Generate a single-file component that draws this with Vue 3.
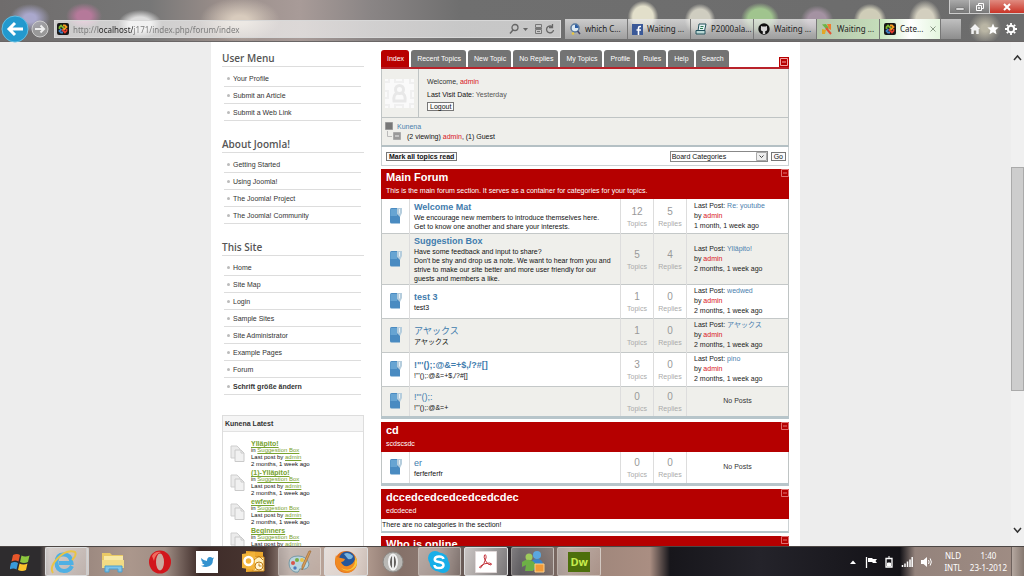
<script setup>
import { ref } from 'vue'

const address = ref('http://localhost/j171/index.php/forum/index')
const board = ref('Board Categories')

const browserTabs = [
  { icon: 'search', label: 'which C...' },
  { icon: 'facebook', label: 'Waiting ...' },
  { icon: 'pager', label: 'P2000ala...' },
  { icon: 'github', label: 'Waiting ...' },
  { icon: 'leaf', label: 'Waiting ...', tint: true },
  { icon: 'joomla', label: 'Cate...', active: true }
]

const menus = [
  { title: 'User Menu', items: ['Your Profile', 'Submit an Article', 'Submit a Web Link'] },
  { title: 'About Joomla!', items: ['Getting Started', 'Using Joomla!', 'The Joomla! Project', 'The Joomla! Community'] },
  { title: 'This Site', items: ['Home', 'Site Map', 'Login', 'Sample Sites', 'Site Administrator', 'Example Pages', 'Forum', 'Schrift größe ändern'] }
]

const latest = ['Ylläpito!', '(1)-Ylläpito!', 'ewfewf', 'Beginners']

const forumTabs = ['Index', 'Recent Topics', 'New Topic', 'No Replies', 'My Topics', 'Profile', 'Rules', 'Help', 'Search']

const sections = [
  {
    title: 'Main Forum',
    text: 'This is the main forum section. It serves as a container for categories for your topics.',
    rows: [
      { name: 'Welcome Mat', lines: ['We encourage new members to introduce themselves here.', 'Get to know one another and share your interests.'], topics: 12, replies: 5, post: 'Re: youtube', when: '1 month, 1 week ago', bold: true },
      { name: 'Suggestion Box', lines: ['Have some feedback and input to share?', "Don't be shy and drop us a note. We want to hear from you and strive to make our site better and more user friendly for our guests and members a like."], topics: 5, replies: 4, post: 'Ylläpito!', when: '2 months, 1 week ago', bold: true },
      { name: 'test 3', lines: ['test3'], topics: 1, replies: 0, post: 'wedwed', when: '2 months, 1 week ago', bold: true },
      { name: 'アヤックス', lines: ['アヤックス'], topics: 1, replies: 0, post: 'アヤックス', when: '2 months, 1 week ago' },
      { name: "!\"'();:@&=+$,/?#[]", lines: ["!\"'();:@&=+$,/?#[]"], topics: 3, replies: 0, post: 'pino', when: '2 months, 1 week ago', bold: true },
      { name: "!\"'();:", lines: ["!\"'();:@&=+"], topics: 0, replies: 0 }
    ]
  },
  { title: 'cd', text: 'scdscsdc', rows: [{ name: 'er', lines: ['ferferferfr'], topics: 0, replies: 0 }] },
  { title: 'dccedcedcedcedcedcdec', text: 'edcdeced', rows: [], empty: 'There are no categories in the section!' },
  { title: 'Who is online', text: '', rows: [] }
]

const tasks = [
  { id: 'ie', label: 'Internet Explorer', state: 'lit stack' },
  { id: 'folder', label: 'Explorer' },
  { id: 'opera', label: 'Opera' },
  { id: 'twitter', label: 'Twitter' },
  { id: 'outlook', label: 'Outlook' },
  { id: 'paint', label: 'Paint', state: 'open' },
  { id: 'firefox', label: 'Firefox', state: 'lit' },
  { id: 'operagray', label: 'Opera Mobile' },
  { id: 'skype', label: 'Skype', state: 'open' },
  { id: 'pdf', label: 'Adobe Reader', state: 'lit' },
  { id: 'messenger', label: 'Messenger', state: 'open' },
  { id: 'dw', label: 'Dreamweaver', state: 'open' }
]
</script>

<template>
  <div class="screen">
    <header class="chrome">
      <div class="window-controls">
        <button type="button" aria-label="Minimize"><svg width="10" height="10" viewBox="0 0 10 10"><path d="M1 6h8v2H1z" fill="#fff" stroke="#555" stroke-width=".5" /></svg></button>
        <button type="button" aria-label="Restore"><svg width="10" height="10" viewBox="0 0 10 10" fill="none" stroke="#fff"><path d="M3.500 3V1.500h5v5H7" /><path d="M1.500 3.500h5v5h-5zM3.500 5.500h1v1h-1z" /></svg></button>
        <button type="button" class="close" aria-label="Close"><svg width="10" height="10" viewBox="0 0 10 10"><path d="M2 2l6 6M8 2L2 8" stroke="#fff" stroke-width="2" /></svg></button>
      </div>
      <div class="toolbar">
        <button type="button" class="back" aria-label="Back"><svg width="28" height="28" viewBox="0 0 28 28"><circle cx="14" cy="14" r="13" fill="#2299ce" stroke="#63bde1" /><path d="M22 14H8M14 8l-6 6 6 6" fill="none" stroke="#fff" stroke-width="3" /></svg></button>
        <button type="button" class="forward" aria-label="Forward"><svg width="18" height="18" viewBox="0 0 18 18"><circle cx="9" cy="9" r="8" fill="#aaa" fill-opacity=".7" stroke="#ccc" /><path d="M4 9h9M9.500 5.500L13 9l-3.500 3.500" fill="none" stroke="#eee" stroke-width="2" /></svg></button>
        <div class="address">
          <svg width="12" height="12" viewBox="0 0 12 12"><rect width="12" height="12" rx="2" fill="#181818" /><path d="M2.500 6V4L4 2.500l4 4" stroke="#7ab62f" stroke-width="1.800" fill="none" /><path d="M6 2.500h2L9.500 4l-4 4" stroke="#f39a1f" stroke-width="1.800" fill="none" /><path d="M9.500 6v2L8 9.500l-3-3" stroke="#e23b2c" stroke-width="1.800" fill="none" /><path d="M6 9.500H4L2.500 8l2-2" stroke="#3d80c6" stroke-width="1.800" fill="none" /></svg>
          <input v-model="address" type="text" aria-label="Address">
          <svg width="46" height="12" viewBox="0 0 46 12" fill="none" stroke="#666"><circle cx="6" cy="4.500" r="3" stroke-width="1.300" /><path d="M4 7L1 10.500" stroke-width="1.500" /><path d="M14 5h5l-2.500 3z" fill="#666" stroke="none" /><path d="M26.500 1.500h6v3h-6zM26.500 6.500h6v4h-6zM26 5.500h7M28 8.500h3" stroke="#777" /><path d="M43 3.500A3.500 3.500 0 1 0 44.500 7M43.500 1v3.500H40" stroke-width="1.300" /></svg>
        </div>
        <nav class="tabs" aria-label="Open pages">
          <button v-for="(tab, i) in browserTabs" :key="i" type="button" class="tab" :class="{ active: tab.active, tint: tab.tint }">
            <svg v-if="tab.icon === 'search'" width="12" height="12" viewBox="0 0 12 12"><circle cx="6" cy="5" r="4" fill="#dce9f3" stroke="#59799c" stroke-width="1.500" /><path d="M6 1.500A3.500 3.500 0 0 1 9.500 5H6z" fill="#2c5fa6" /><path d="M8.500 8l2.500 3" stroke="#446" stroke-width="1.500" /><circle cx="4" cy="10.500" r="1.300" fill="#e8c63c" /></svg>
            <svg v-else-if="tab.icon === 'facebook'" width="11" height="11" viewBox="0 0 11 11"><rect width="11" height="11" fill="#3b5998" /><path d="M9 2.500H8q-1.500 0-1.500 1.500v7M4.500 6H9" fill="none" stroke="#fff" stroke-width="1.600" /></svg>
            <svg v-else-if="tab.icon === 'pager'" width="12" height="12" viewBox="0 0 12 12"><path d="M4 1h7L9.500 8H3z" fill="#e7f3f6" stroke="#22505b" /><path d="M1 7.500h9V11H1z" fill="#b9d7d4" stroke="#22505b" /><path d="M5.500 3.500h3M5 5.500h3" stroke="#297b50" /></svg>
            <svg v-else-if="tab.icon === 'github'" width="12" height="12" viewBox="0 0 12 12"><circle cx="6" cy="6" r="5.700" fill="#111" /><path d="M3 3l1.500.6q1.500-.4 3 0L9 3v2q.7 3-1.800 3.200V11H4.800V8.200Q2.300 8 3 5z" fill="#d5d5d5" /></svg>
            <svg v-else-if="tab.icon === 'leaf'" width="12" height="12" viewBox="0 0 12 12"><path d="M1 1.500l4-.5 3 4-2 2z" fill="#6db445" /><path d="M6 1h4v6L8 6z" fill="#f07d2e" /><path d="M1 6l4 1-1 4H1z" fill="#e1a726" /><path d="M5 5l5 6" stroke="#e55132" stroke-width="2" /></svg>
            <svg v-else width="12" height="12" viewBox="0 0 12 12"><rect width="12" height="12" rx="2" fill="#181818" /><path d="M2.500 6V4L4 2.500l4 4" stroke="#7ab62f" stroke-width="1.800" fill="none" /><path d="M6 2.500h2L9.500 4l-4 4" stroke="#f39a1f" stroke-width="1.800" fill="none" /><path d="M9.500 6v2L8 9.500l-3-3" stroke="#e23b2c" stroke-width="1.800" fill="none" /><path d="M6 9.500H4L2.500 8l2-2" stroke="#3d80c6" stroke-width="1.800" fill="none" /></svg>
            <span>{{ tab.label }}</span>
            <svg v-if="tab.active" class="tab-close" width="8" height="8" viewBox="0 0 8 8"><path d="M1.500 1.500l5 5M6.500 1.500l-5 5" stroke="#8a9a86" /></svg>
          </button>
          <button type="button" class="new-tab" aria-label="New tab"></button>
        </nav>
        <div class="tools">
          <button type="button" aria-label="Home"><svg width="12" height="12" viewBox="0 0 12 12"><path d="M6 1l5 5H9.700v5H7.200V7.500H4.800V11H2.300V6H1z" fill="#f2f2f2" /></svg></button>
          <button type="button" aria-label="Favorites"><svg width="12" height="12" viewBox="0 0 12 12"><path d="M6 .5l1.600 3.700 4 .4-3 2.700.9 4L6 9.200l-3.500 2.100.9-4-3-2.700 4-.4z" fill="#fff" /></svg></button>
          <button type="button" aria-label="Tools"><svg width="12" height="12" viewBox="0 0 12 12"><circle cx="6" cy="6" r="3.200" fill="none" stroke="#fff" stroke-width="2" /><path d="M6 0v2M6 10v2M0 6h2M10 6h2M1.800 1.800l1.400 1.400M8.800 8.800l1.400 1.400M10.200 1.800L8.800 3.200M3.200 8.800l-1.400 1.400" stroke="#fff" stroke-width="1.800" /></svg></button>
        </div>
      </div>
    </header>

    <div class="viewport">
      <div class="page">
        <aside class="sidebar">
          <nav v-for="menu in menus" :key="menu.title" class="menu">
            <h3>{{ menu.title }}</h3>
            <ul>
              <li v-for="item in menu.items" :key="item"><a href="#" :class="{ strong: item.startsWith('Schrift') }">{{ item }}</a></li>
            </ul>
          </nav>
          <section class="latest">
            <h4>Kunena Latest</h4>
            <ul>
              <li v-for="topic in latest" :key="topic">
                <svg width="15" height="18" viewBox="0 0 15 18"><path d="M1 1h6l3 3v9H1z" fill="#ebebeb" stroke="#cfcfcf" /><path d="M5 5h6l3 3v8.500H5z" fill="#f1f1f1" stroke="#cacaca" /><path d="M11 5v3h3" fill="none" stroke="#cacaca" /></svg>
                <div>
                  <a href="#" class="topic">{{ topic }}</a>
                  <p>in <a href="#">Suggestion Box</a></p>
                  <p>Last post by <a href="#">admin</a></p>
                  <p>2 months, 1 week ago</p>
                </div>
              </li>
            </ul>
          </section>
        </aside>

        <main class="forum">
          <div class="forum-top">
            <nav class="forum-tabs">
              <a v-for="(tab, i) in forumTabs" :key="tab" href="#" :class="{ current: i === 0 }">{{ tab }}</a>
            </nav>
            <button type="button" class="top-toggle" aria-label="Collapse"><svg width="8" height="8" viewBox="0 0 8 8"><path d="M.5.5h7v7h-7zM2 4h4" fill="none" stroke="#f3a5a5" /></svg></button>
          </div>
          <div class="profile">
            <div class="avatar"><svg width="29" height="29" viewBox="0 0 29 29"><rect width="29" height="29" fill="#fafafa" /><path d="M0 3h4V0M10 0v3h8V0M25 0v4h4M0 12h3v7H0M29 12h-3v7h3M0 26h4v3M10 29v-3h8v3M25 29v-4h4" fill="none" stroke="#f0f0f0" stroke-width="2" /><circle cx="14.500" cy="10.500" r="4" fill="none" stroke="#e8e8e8" stroke-width="3" /><path d="M12 14q-4 2-3 8h11q1-6-3-8" fill="none" stroke="#e8e8e8" stroke-width="3" /></svg></div>
            <div class="welcome">
              <p>Welcome, <a href="#">admin</a></p>
              <p class="visit">Last Visit Date: <span>Yesterday</span></p>
              <button type="button" class="plain">Logout</button>
            </div>
          </div>
          <div class="path">
            <p><svg width="8" height="8" viewBox="0 0 8 8"><path d="M.5.5h7v7h-7z" fill="#777" stroke="#999" /></svg><a href="#">Kunena</a></p>
            <p class="viewing"><svg width="14" height="10" viewBox="0 0 14 10"><path d="M.5 0v5.500H5" fill="none" stroke="#bbb" /><path d="M6.500 1.500h7v7h-7z" fill="#999" stroke="#aaa" /><path d="M8 5h4" stroke="#eee" /></svg><span>(2 viewing) <a href="#">admin</a>, (1) Guest</span></p>
          </div>
          <form class="actions" @submit.prevent>
            <button type="button" class="plain mark">Mark all topics read</button>
            <div class="jump">
              <span class="select-box">
                <select v-model="board" aria-label="Board categories"><option>Board Categories</option></select>
                <svg width="11" height="9" viewBox="0 0 11 9"><path d="M.5.500h10v8h-10z" fill="#eee" stroke="#aaa" /><path d="M3.500 3.500l2 2 2-2" fill="none" stroke="#444" /></svg>
              </span>
              <button type="submit" class="plain go">Go</button>
            </div>
          </form>

          <section v-for="section in sections" :key="section.title" class="block">
            <header>
              <h2>{{ section.title }}</h2>
              <p>{{ section.text }}</p>
              <button type="button" class="toggle" aria-label="Collapse section"><svg width="8" height="8" viewBox="0 0 8 8"><path d="M.5.5h7v7h-7zM2 4h4" fill="none" stroke="#e07070" /></svg></button>
            </header>
            <table v-if="section.rows.length">
              <tbody>
                <tr v-for="row in section.rows" :key="row.name">
                  <td class="icon"><svg width="14" height="18" viewBox="0 0 14 18"><path d="M1 2.500q0-1.500 1.500-1.500H11v15.500H2.500Q1 16.500 1 15z" fill="#4a8bc1" /><path d="M1.500 2H8v7H1.500z" fill="#67a4d2" /><path d="M8 1h5v5l-2 4-3-3z" fill="#b5cddd" /><path d="M10.500 2v4.500" stroke="#e8f1f7" /></svg></td>
                  <td class="name">
                    <h5 :class="{ bold: row.bold }"><a href="#">{{ row.name }}</a></h5>
                    <p v-for="line in row.lines" :key="line">{{ line }}</p>
                  </td>
                  <td class="count"><b>{{ row.topics }}</b><span>Topics</span></td>
                  <td class="count"><b>{{ row.replies }}</b><span>Replies</span></td>
                  <td v-if="row.post" class="last">
                    <p>Last Post: <a href="#">{{ row.post }}</a></p>
                    <p>by <a href="#" class="user">admin</a></p>
                    <p>{{ row.when }}</p>
                  </td>
                  <td v-else class="last none">No Posts</td>
                </tr>
              </tbody>
            </table>
            <p v-else-if="section.empty" class="empty">{{ section.empty }}</p>
          </section>
        </main>
      </div>
      <div class="scrollbar" aria-hidden="true">
        <svg width="13" height="12" viewBox="0 0 13 12"><path d="M3 8l3.500-4L10 8" fill="none" stroke="#333" stroke-width="1.500" /></svg>
        <div class="track"><div class="thumb"></div></div>
        <svg width="13" height="12" viewBox="0 0 13 12"><path d="M3 4l3.500 4L10 4" fill="none" stroke="#333" stroke-width="1.500" /></svg>
      </div>
    </div>

    <footer class="taskbar">
      <button type="button" class="start" aria-label="Start"><svg width="22" height="20" viewBox="0 0 22 20"><path d="M3 3q4-2 7 0L8.500 9.500q-3-2-7 0z" fill="#e8562a" /><path d="M11.500 3.500q3.500 2 8 0L18 10q-4 2-8 0z" fill="#8cc63e" /><path d="M1 11q4-2 7 0l-1.500 6.500q-3-2-7 0z" fill="#3a9ad9" /><path d="M9.500 11.500q4 2 8 0L16 18q-4 2-8 0z" fill="#fbc32c" /></svg></button>
      <div class="tasks">
        <button v-for="task in tasks" :key="task.id" type="button" :class="task.state" :aria-label="task.label">
          <svg v-if="task.id === 'ie'" width="28" height="26" viewBox="0 0 28 26"><path d="M22 17Q19.500 22 14 22q-7.500 0-7.500-8.500T14 5.500q7 0 7.500 8.500H9" fill="none" stroke="#4fb0e4" stroke-width="4" /><path d="M3 24Q-1 18 8 9T25 3q2 3-3 8" fill="none" stroke="#e9c446" stroke-width="2" /></svg>
          <svg v-else-if="task.id === 'folder'" width="26" height="24" viewBox="0 0 26 24"><path d="M2 3h8l2 2h11v13H2z" fill="#e9c965" /><path d="M4 6h19v12H4z" fill="#f8e9a5" /><path d="M2 10h22v8H2z" fill="#f2db84" /><path d="M5 22v-6h17v6h-4v-3H9v3z" fill="#7fc4e8" stroke="#4b9fcf" /></svg>
          <svg v-else-if="task.id === 'opera'" width="24" height="24" viewBox="0 0 24 24"><ellipse cx="12" cy="12" rx="11" ry="11.500" fill="#d2161c" /><path d="M4 6q3-5 9-4-6 2-7 9z" fill="#f06a5e" /><ellipse cx="12" cy="12" rx="4" ry="8.500" fill="#c9aaa0" /></svg>
          <svg v-else-if="task.id === 'twitter'" width="22" height="22" viewBox="0 0 22 22"><rect width="22" height="22" fill="#fff" /><path d="M5 7q3 3 6 3 0-4 3-4 1.500 0 2.300 1L18 6.500 17 8.500q0 7-7 7.500-3 0-5-1.300 2.500 0 3.500-1.200Q6 13 6 11.500h1Q5 10 5 7z" fill="#3492cf" /></svg>
          <svg v-else-if="task.id === 'outlook'" width="24" height="24" viewBox="0 0 24 24"><path d="M5 1l17 1v19L5 22z" fill="#eda82c" /><path d="M12 7h11v14H12z" fill="#fff0bb" stroke="#d48b18" /><path d="M1 4l13-2v18L1 18z" fill="#f2b43a" /><circle cx="7.500" cy="11" r="4" fill="none" stroke="#fff" stroke-width="2.500" /><circle cx="18" cy="16" r="4" fill="#fff6d6" stroke="#bf7b12" /><path d="M18 13.500V16h2.500M13 10l5-4 4 4" fill="none" stroke="#c17d15" /></svg>
          <svg v-else-if="task.id === 'paint'" width="26" height="24" viewBox="0 0 26 24"><path d="M2 13Q2 6 11 6t11 8q-1 6-7 5-3-1-3 1.500T8 22Q2 20 2 13z" fill="#b9d5df" stroke="#7698a5" /><circle cx="6" cy="13" r="2" fill="#d9534a" /><circle cx="10" cy="10" r="2" fill="#7aad48" /><circle cx="15" cy="10" r="2" fill="#e8c34a" /><circle cx="8" cy="18" r="1.700" fill="#4b79be" /><path d="M24 1l-7 16-2 3 0-4 7-15z" fill="#d89b57" stroke="#9c6c37" stroke-width=".7" /></svg>
          <svg v-else-if="task.id === 'firefox'" width="26" height="24" viewBox="0 0 26 24"><circle cx="13" cy="12" r="11" fill="#e3701c" /><circle cx="14" cy="9.500" r="8" fill="#24569a" /><path d="M11 4q4-3 9 2-1 4-5 3z" fill="#79b4df" /><path d="M3 5q1 3 5 3l4 1q-1 3-4 3 2 5 7 4 6-2 7-7 4 6-1 11-6 5-13 1Q0 16 3 5z" fill="#f08a22" /><path d="M22 6q5 8-2 13-7 4-12-1 8 4 12-1 3-4 2-11z" fill="#f8c93c" /></svg>
          <svg v-else-if="task.id === 'operagray'" width="22" height="22" viewBox="0 0 22 22"><circle cx="11" cy="11" r="10" fill="#b9b8b5" stroke="#8b8884" /><ellipse cx="11" cy="11" rx="4" ry="7.500" fill="#625f5d" stroke="#f2f2f2" stroke-width="2" /><path d="M11 4v14" stroke="#e9e9e9" stroke-width="2" /></svg>
          <svg v-else-if="task.id === 'skype'" width="24" height="24" viewBox="0 0 24 24"><circle cx="8" cy="8" r="7" fill="#17aee8" /><circle cx="16" cy="16" r="7" fill="#17aee8" /><circle cx="12" cy="12" r="9.500" fill="#17aee8" /><path d="M16.500 9Q16 6.500 12 6.500T7.700 9.300Q7.700 11.500 12 12t4.500 3q0 3-4.500 3t-4.500-3" fill="none" stroke="#fff" stroke-width="2.500" /></svg>
          <svg v-else-if="task.id === 'pdf'" width="22" height="22" viewBox="0 0 22 22"><path d="M.5.5h21v21H.5z" fill="#fff" stroke="#e2dada" /><path d="M9.500 4q2-1 1.500 3-1.500 6-5.500 10-2 0 0-2 4-3 9-3 3 .5 1.500 2-3 .5-6-5-1.500-3-.5-5z" fill="none" stroke="#c4333b" /></svg>
          <svg v-else-if="task.id === 'messenger'" width="26" height="24" viewBox="0 0 26 24"><circle cx="17" cy="5" r="4" fill="#5ba7df" /><path d="M11 20V13q1-4 6-4t6 5v6z" fill="#3985ca" /><circle cx="9" cy="7" r="3.500" fill="#9fcb5b" /><path d="M2 12q4-3 8-2t6 5l-3 6H5l1-6-4 2z" fill="#6daf46" /><path d="M15 14h9v8h-9z" fill="#f19a38" stroke="#ffd08a" /></svg>
          <span v-else class="dw">Dw</span>
        </button>
      </div>
      <div class="tray">
        <svg width="8" height="8" viewBox="0 0 8 8"><path d="M1 6l3-3.500L7 6z" fill="#fff" /></svg>
        <svg width="12" height="12" viewBox="0 0 12 12"><path d="M1.500 1v11" stroke="#fff" stroke-width="1.300" /><path d="M3 2h4l1 1h4L10.500 5 12 7H8L7 6H3z" fill="#fff" /></svg>
        <svg width="8" height="12" viewBox="0 0 8 12"><path d="M1 2.500h6V11H1z" fill="none" stroke="#fff" stroke-width="1.300" /><path d="M3 1h2M2.500 7h3v3h-3z" fill="#fff" stroke="#fff" /></svg>
        <svg width="12" height="12" viewBox="0 0 12 12" stroke="#fff" stroke-width="1.500"><path d="M1.500 9v2M4 7.500V11M6.500 5.500V11M9 3.500V11M11.200 1v10" /></svg>
        <svg width="12" height="12" viewBox="0 0 12 12"><path d="M0 4h2.500L6 1v10L2.500 8H0z" fill="#fff" /><path d="M7.500 4q1.300 2 0 4M9.200 2.500q2.300 3.500 0 7" fill="none" stroke="#fff" /></svg>
        <p class="lang">NLD<br>INTL</p>
        <p class="clock">1:40<br>23-1-2012</p>
      </div>
      <button type="button" class="show-desktop" aria-label="Show desktop"></button>
    </footer>
  </div>
</template>

<style>
html, body { margin: 0; overflow: hidden; }
</style>

<style scoped>
.screen { display: flex; flex-direction: column; height: 100vh; overflow: hidden; background: #ededed; color: #333; font: 7px/9px "Liberation Sans", "Noto Sans CJK JP", sans-serif; }
.screen * { box-sizing: border-box; }
button, input, select { font: inherit; color: inherit; margin: 0; padding: 0; border: 0; background: none; }
h2, h3, h4, h5, p, ul { margin: 0; padding: 0; list-style: none; font-size: inherit; }
a { color: inherit; text-decoration: none; }
svg { display: block; flex: none; }

.chrome {
  position: relative; flex: none; padding-top: 16px; height: 42px;
  font: 8px/12px "Noto Sans", "Open Sans", sans-serif;
  border-bottom: 1px solid #6a6666;
  background:
    radial-gradient(ellipse 20px 14px at 30px 18px, #aaa8cc 30%, transparent),
    radial-gradient(ellipse 18px 13px at 84px 16px, #b5799a 40%, transparent),
    radial-gradient(ellipse 22px 14px at 140px 24px, #ddd 50%, transparent),
    radial-gradient(ellipse 40px 22px at 240px 20px, #d8cbbd 20%, transparent),
    radial-gradient(ellipse 17px 18px at 643px 17px, #e2dfca 60%, transparent 90%),
    radial-gradient(ellipse 17px 18px at 700px 20px, #cfcdc0 60%, transparent 90%),
    radial-gradient(ellipse 20px 17px at 760px 19px, #a0c48e 60%, transparent 95%),
    radial-gradient(ellipse 18px 16px at 817px 20px, #a492a2 50%, transparent 90%),
    radial-gradient(ellipse 18px 18px at 870px 20px, #cfcdb8 60%, transparent 90%),
    radial-gradient(ellipse 18px 22px at 925px 20px, #d3cfbf 50%, transparent 90%),
    radial-gradient(ellipse 18px 18px at 985px 28px, #b9b5a4 20%, transparent 90%),
    linear-gradient(90deg, #6f6c6c, #777 150px, #9a8e8a 220px, #a89b98 300px, #8a8585 370px, #6f6f6f 460px, #6c6c6c);
}
.window-controls { position: absolute; top: 0; right: 0; display: flex; height: 14px; border: 1px solid #ccc; border-top: 0; border-right: 0; }
.window-controls button { display: grid; place-items: center; width: 20px; background: linear-gradient(#aaa, #777); border-right: 1px solid #ccc; }
.window-controls .close { width: 34px; border: 0; background: linear-gradient(#e08b80, #c93427); }
.toolbar { display: flex; align-items: center; height: 26px; }
.back { width: 28px; margin-left: 1px; }
.forward { width: 18px; margin-left: 2px; }
.address { flex: 1; display: flex; align-items: center; gap: 4px; height: 18px; margin-left: 5px; padding: 0 5px 0 2px; border: 1px solid #d8d8d8; background: linear-gradient(90deg, rgba(255, 255, 255, .65), rgba(235, 235, 235, .7)); }
.address input { flex: 1; min-width: 0; height: 14px; color: transparent; outline: 0; background: linear-gradient(90deg, #777 25px, #222 25px 60px, #777 60px); background-clip: text; -webkit-background-clip: text; }
.tabs { display: flex; margin-left: 4px; height: 20px; }
.tab { display: flex; align-items: center; gap: 4px; width: 63px; padding-left: 4px; overflow: hidden; white-space: nowrap; color: #222; border-right: 1px solid #777; background: linear-gradient(rgba(235, 235, 235, .75), rgba(175, 175, 175, .75)); }
.tab.tint { background: linear-gradient(90deg, #b4c5ab, #c5ddba); }
.tab.active { width: 61px; background: linear-gradient(90deg, #c8e8bd, #fff 50%, #e4f5de); }
.tab-close { margin-left: auto; margin-right: 3px; }
.new-tab { width: 20px; background: linear-gradient(#c0c0c0, #8d8d8d); }
.tools { display: flex; gap: 6px; padding: 0 7px 0 8px; }

.viewport { flex: 1; min-height: 0; display: flex; overflow: hidden; }
.page { display: grid; grid-template-columns: 142px 1fr; gap: 17px; width: 589px; max-width: 100%; margin: 0 auto; padding: 8px 11px 0; background: #fff; align-self: flex-start; }
.scrollbar { flex: none; width: 13px; display: flex; flex-direction: column; padding: 10px 0; background: #f0f0f0; }
.track { flex: 1; display: flex; flex-direction: column; }
.track::before { content: ""; flex: 103; }
.track::after { content: ""; flex: 134; }
.thumb { flex: 223; background: #cdcdcd; border: 1px solid #aaa; }

.menu { margin-bottom: 15px; }
.menu h3 { padding-top: 1px; padding-bottom: 1px; border-bottom: 1px solid #ddd; font: 600 10px/14px "Open Sans", "Noto Sans", sans-serif; color: #555; }
.menu ul { padding: 3px 3px 0 2px; }
.menu li { display: flex; align-items: center; gap: 3px; height: 17px; padding-left: 3px; border-bottom: 1px solid #ddd; }
.menu li::before { content: ""; width: 3px; height: 3px; border-radius: 50%; background: #bbb; }
.menu .strong { font-weight: bold; }
.latest { margin-top: 20px; border: 1px solid #ddd; border-bottom: 0; }
.latest h4 { padding: 3px 2px; border-bottom: 1px solid #e2e2e2; background: #f5f5f5; }
.latest ul { padding: 8px 0 0 7px; }
.latest li { display: flex; align-items: center; gap: 6px; margin-bottom: 1px; font-size: 6px; line-height: 7px; color: #111; }
.latest a { color: #78a22f; text-decoration: underline; }
.latest .topic { display: block; font-size: 7px; font-weight: bold; }

.forum-top { display: flex; justify-content: space-between; align-items: flex-end; border-bottom: 2px solid #b9222a; }
.forum-tabs { display: flex; gap: 2px; }
.forum-tabs a { padding: 4px 5px 4px 6px; border-radius: 3px 3px 0 0; background: #737373; color: #fff; }
.forum-tabs .current { background: #b80000; }
.top-toggle { padding: 1px; background: #b80000; }
.profile { display: flex; min-height: 49px; border: 1px solid #bfc4c4; border-top: 0; background: #efefeb; }
.avatar { display: flex; align-items: center; padding: 0 4px 0 3px; border-right: 1px solid #bfc4c4; }
.welcome { padding: 8px 8px 5px; }
.welcome a, .user, .viewing a { color: #d8141c; }
.visit { margin: 4px 0 3px; color: #111; }
.visit span { color: #555; }
.plain { height: 9px; padding: 0 2px; border: 1px solid #777; line-height: 7px; color: #111; background: #fafafa; }
.welcome .plain { display: block; }
.path { padding: 3px 3px 4px; border: 1px solid #bfc4c4; border-top: 0; border-bottom: 2px solid #b4c0c4; background: #efefeb; }
.path p { display: flex; align-items: center; gap: 4px; min-height: 10px; color: #111; }
.path p > a { color: #4a80ae; }
.path .viewing { gap: 6px; padding-left: 2px; }
.actions { display: flex; justify-content: space-between; align-items: center; height: 19px; margin-bottom: 3px; padding: 0 2px 0 4px; border: 1px solid #ccd2d4; border-top: 0; }
.mark { font-weight: bold; }
.jump { display: flex; gap: 3px; align-items: center; }
.select-box { position: relative; display: block; }
.select-box select { display: block; width: 98px; height: 11px; padding: 0 12px 0 1px; border: 1px solid #888; appearance: none; background: #fff; color: #111; line-height: 9px; }
.select-box svg { position: absolute; top: 1px; right: 1px; pointer-events: none; }

.block { margin-bottom: 3px; }
.block header { position: relative; min-height: 30px; padding: 2px 5px 3px; background: #b50000; color: #fff; }
.block h2 { font-size: 11px; line-height: 13px; }
.block header p { margin-top: 2px; line-height: 9px; }
.toggle { position: absolute; top: 0; right: 0; }
table { width: 100%; border-collapse: collapse; border: 1px solid #bfc4c4; border-top: 0; border-bottom: 3px solid #b7c5ca; table-layout: fixed; }
tr { height: 34px; }
tr:last-child { height: 31px; }
tr:only-child { height: 33px; }
tr:nth-child(even) { background: #efefeb; }
tr + tr { border-top: 1px solid #c4c8c8; }
td { padding: 0; }
td + td { border-left: 1px solid #ddd; }
.icon { width: 28px; }
.icon svg { margin: 0 auto; }
.name { padding: 1px 4px; }
.name h5 { font-size: 9px; line-height: 12px; font-weight: normal; color: #3f7cad; }
.name .bold { font-weight: bold; }
.name p { color: #111; }
.count { width: 33px; padding-top: 2px; text-align: center; color: #999; }
.count b { display: block; font-size: 10px; line-height: 14px; font-weight: normal; }
.count span { display: block; line-height: 10px; color: #aaa; }
.last { width: 102px; padding-left: 7px; line-height: 10px; }
.last p { color: #222; }
.last a { color: #4a80ae; }
.last .user { color: #d8141c; }
.none { padding: 0; text-align: center; }
.empty { min-height: 14px; padding-top: 1px; color: #111; border: 1px solid #ccd2d4; border-top: 0; border-bottom: 2px solid #b7c5ca; }

.taskbar {
  flex: none; display: flex; height: 30px; border-top: 1px solid #4c4644; color: #fff;
  background: linear-gradient(90deg, #2e2c2e 40px, #8f7d76 50px, #ab978c 130px, #a08e85 165px, #3d2b28 200px, #4a3732 265px, #a8968d 290px, #c5ada0 350px, #857169 400px, #8f7b73 440px, #4d4341 480px, #221f24 520px, #9b8378 570px, #aa8e82 650px, #17161b 670px, #24232a 760px, #131217 900px, #94837c 915px, #a08d84);
}
.start { width: 45px; display: grid; place-items: center; padding-right: 4px; }
.tasks { flex: 0 1 556px; display: grid; grid-template-columns: repeat(12, 1fr); column-gap: 3px; }
.tasks button { display: grid; place-items: center; border: 1px solid transparent; border-radius: 2px; overflow: hidden; }
.tasks .open { border-color: rgba(230, 225, 220, .5); background: linear-gradient(120deg, rgba(255, 255, 255, .4), rgba(255, 255, 255, .1)); }
.tasks .lit { border-color: #ddd; background: linear-gradient(120deg, rgba(255, 255, 255, .65), rgba(255, 255, 255, .35)); }
.tasks .stack { padding-right: 4px; border-right: 3px double #ccc; }
.dw { display: grid; place-items: center; width: 22px; height: 20px; background: #4d6f0c; color: #c7ec4e; font: bold 11px/20px "Open Sans", sans-serif; }
.tray { margin-left: auto; display: flex; align-items: center; gap: 8px; font: 8px/12px "Noto Sans", "Open Sans", sans-serif; text-align: center; }
.lang { margin-left: 3px; }
.clock { margin-right: 4px; }
.show-desktop { width: 13px; border-left: 1px solid #6e625d; background: linear-gradient(90deg, #b5a8a0, #85776f); }
</style>
